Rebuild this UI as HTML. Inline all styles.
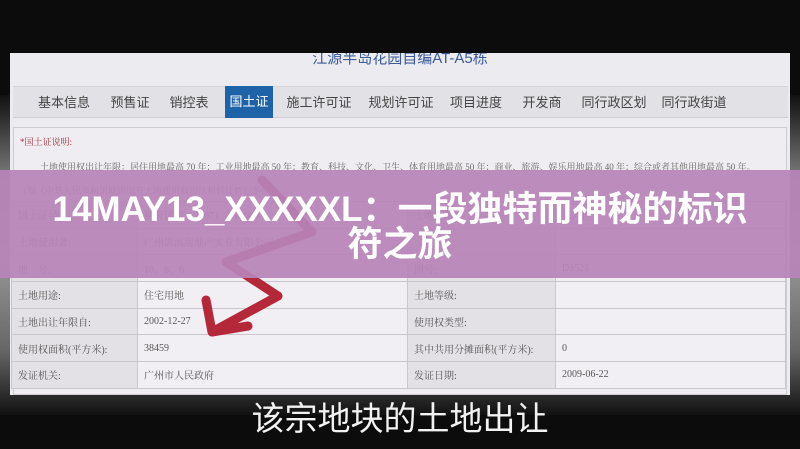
<!DOCTYPE html>
<html><head><meta charset="utf-8"><style>
*{margin:0;padding:0;box-sizing:border-box}
body{width:800px;height:449px;overflow:hidden;background:#0c0c0c;position:relative;font-family:"Liberation Serif","Noto Serif CJK SC",serif}
.bgside{position:absolute;left:0;right:0;top:95px;height:320px;background:linear-gradient(#111,#777 25%,#999 50%,#666 80%,#111)}
.panel{position:absolute;left:10px;top:53px;width:780px;height:342px;background:#ecebef}
.title{position:absolute;top:0;left:0;width:780px;text-align:center;font:15px "Liberation Sans","Noto Sans CJK SC",sans-serif;line-height:12px;color:#3a5a9a;overflow:hidden;height:14px}
.tabs{position:absolute;left:3px;top:33px;width:775px;height:32px;background:#e2e1e6;border-top:1px solid #d6d5da;border-bottom:1px solid #d0cfd4}
.tab{position:absolute;top:0;height:31px;font:13px "Liberation Sans","Noto Sans CJK SC",sans-serif;line-height:31px;color:#444;transform:translateX(-50%);white-space:nowrap}
.act{background:#1e63a8;color:#fff;width:48px;text-align:center;transform:none;height:32px;top:-1px;line-height:32px}
.box{position:absolute;left:3px;top:74px;width:774px;height:268px;border:1px solid #cfcdd2;background:#efedf1}
.t{position:absolute;font-size:9px;color:#666;white-space:nowrap}
table{position:absolute;left:1px;top:74px;border-collapse:collapse;width:775px}
td{border:1px solid #c9c7cd;height:26.7px;font-size:10px;color:#555;padding-left:6px}
td.l{background:#e3e1e6}
td.v{background:#f1eff3}
.banner{position:absolute;left:0;top:170px;width:800px;height:108px;background:rgba(184,132,184,.93);color:#fff;text-align:center;font:bold 35px "Liberation Sans","Noto Sans CJK SC",sans-serif;line-height:35px;padding-top:22px}
.sub{position:absolute;top:399px;left:0;width:800px;text-align:center;color:#f2f2f2;font:33px "Liberation Sans","Noto Sans CJK SC",sans-serif;line-height:40px}
</style></head><body>
<div class="bgside"></div>
<div class="panel">
<div class="title">江源半岛花园自编AT-A5栋</div>
<div class="tabs">
<div class="tab" style="left:51px">基本信息</div>
<div class="tab" style="left:117px">预售证</div>
<div class="tab" style="left:176px">销控表</div>
<div class="tab act" style="left:212px">国土证</div>
<div class="tab" style="left:306px">施工许可证</div>
<div class="tab" style="left:388px">规划许可证</div>
<div class="tab" style="left:463px">项目进度</div>
<div class="tab" style="left:529px">开发商</div>
<div class="tab" style="left:601px">同行政区划</div>
<div class="tab" style="left:681px">同行政街道</div>
</div>
<div class="box">
<div class="t" style="left:6px;top:7px;color:#a03040">*国土证说明:</div>
<div class="t" style="left:26px;top:32px">土地使用权出让年限：居住用地最高 70 年；工业用地最高 50 年；教育、科技、文化、卫生、体育用地最高 50 年；商业、旅游、娱乐用地最高 40 年；综合或者其他用地最高 50 年。</div>
<div class="t" style="left:10px;top:56px">(原《中华人民共和国城镇国有土地使用权出让和转让暂行条例》)</div>
</div>
<table style="top:148px">
<tr><td class="l" style="width:126px">国土证号:</td><td class="v" style="width:270px">穗府国用（2007）第10000</td><td class="l" style="width:148px">土地座落:</td><td class="v">天河区</td></tr>
<tr><td class="l">土地使用者:</td><td class="v">广州凯滨房地产实业有限公司</td><td class="l"></td><td class="v"></td></tr>
<tr><td class="l">地　号:</td><td class="v">10、8、6</td><td class="l">图号:</td><td class="v">D1521</td></tr>
<tr><td class="l">土地用途:</td><td class="v">住宅用地</td><td class="l">土地等级:</td><td class="v"></td></tr>
<tr><td class="l">土地出让年限自:</td><td class="v">2002-12-27</td><td class="l">使用权类型:</td><td class="v"></td></tr>
<tr><td class="l">使用权面积(平方米):</td><td class="v">38459</td><td class="l">其中共用分摊面积(平方米):</td><td class="v">0</td></tr>
<tr><td class="l">发证机关:</td><td class="v">广州市人民政府</td><td class="l">发证日期:</td><td class="v">2009-06-22</td></tr>
</table>
</div>
<svg style="position:absolute;left:0;top:0" width="800" height="449"><polyline points="262,180 312,232 226,262 278,296 212,332 206,300 212,332 248,326" fill="none" stroke="#b5283a" stroke-width="9" stroke-linejoin="round" stroke-linecap="round"/></svg>
<div class="banner">14MAY13_XXXXXL：一段独特而神秘的标识<br>符之旅</div>
<div class="sub">该宗地块的土地出让</div>
</body></html>
